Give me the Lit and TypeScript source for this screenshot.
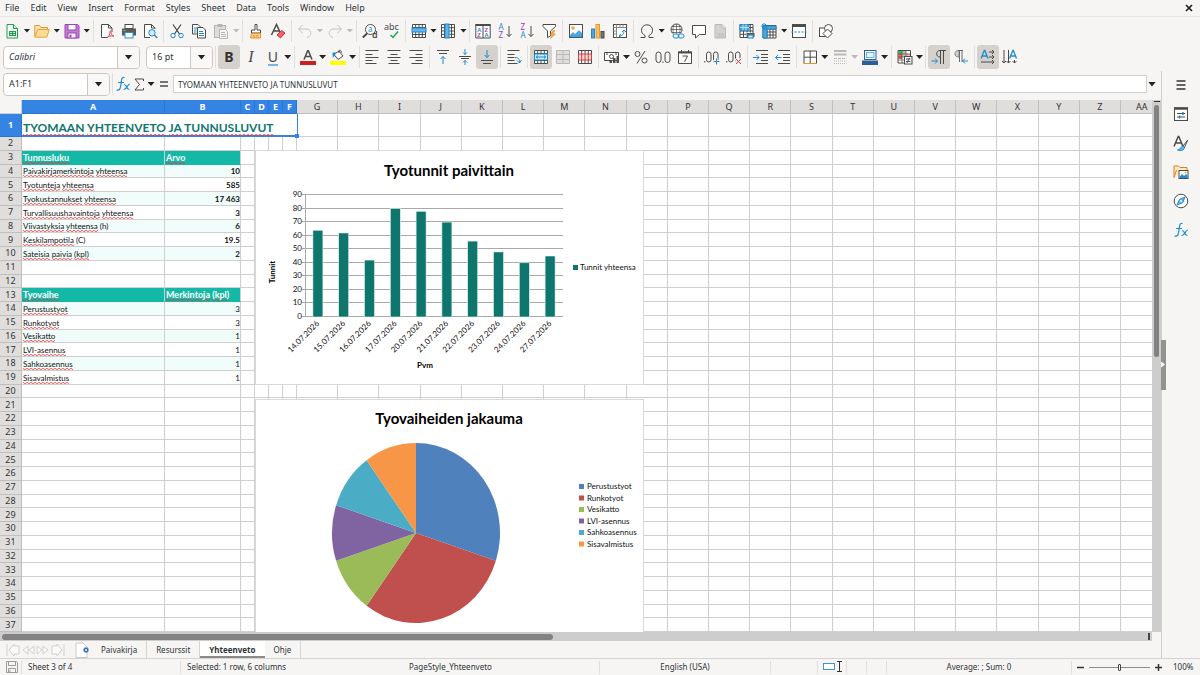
import { LitElement, html, svg, css, nothing } from "lit";
import { customElement } from "lit/decorators.js";
import { classMap } from "lit/directives/class-map.js";

const D = "#4b4b49";
const B = "#1e8bcd";

const ICONS: Record<string, unknown> = {
  new: svg`<path d="M3 1.500h6.500l4 4v9.500H3z" fill="#fff" stroke="#1a9f4a"/><path d="M9.500 1.500v4h4" fill="#c9efd3" stroke="#1a9f4a"/><rect x="5" y="8" width="7" height="5" fill="#1a9f4a"/><path d="M6 9.500h2M9 9.500h2M6 11.500h2M9 11.500h2" stroke="#c9efd3"/>`,
  open: svg`<path d="M.8 13.500V2.500h4.700l1.500 2h6.500v3" fill="#fbe3b4" stroke="#e59728"/><path d="M.8 14.200 3.800 6.500h11.500l-2.500 7.700z" fill="#fddc97" stroke="#e8a33d"/>`,
  save: svg`<path d="M1 1.500h12.500l1.500 1.500v12H1z" fill="#c37ad6" stroke="#9c44b4"/><rect x="4" y="1.500" width="8" height="5.500" fill="#fff" stroke="#9c44b4"/><rect x="4" y="10" width="8" height="5" fill="#fff" stroke="#9c44b4"/><rect x="5.500" y="11.500" width="2" height="3" fill="#9c44b4"/>`,
  pdf: svg`<path d="M13 9V5L9.500 1.500h-7v13H9" fill="#fff" stroke="${D}"/><path d="M9.500 1.500V5H13" fill="none" stroke="${D}"/><path d="M8 15c2-1.500 3-4 3-6.500 0-1 1.200-1 1 .2-.3 2 1.500 4.300 3 4.600M8.500 14c2-1.200 4-1.500 6.500-.7" fill="none" stroke="#e0454d"/>`,
  print: svg`<rect x="4" y="1.500" width="8" height="4" fill="#fff" stroke="${D}"/><path d="M1 5.500h14v7H1z" fill="#5a5a58"/><rect x="4" y="9.500" width="8" height="5.500" fill="#fff" stroke="#2b8fd6"/><path d="M2.500 7.500h2" stroke="#63bce8"/>`,
  preview: svg`<path d="M13 6V5L9.500 1.500h-7v13H8" fill="#fff" stroke="${D}"/><path d="M9.500 1.500V5H13" fill="none" stroke="${D}"/><circle cx="10" cy="9.800" r="3.200" fill="#d5ecfa" stroke="${B}"/><path d="m12.300 12 3 3" stroke="${B}" stroke-width="1.500"/>`,
  cut: svg`<path d="M4 1.500 10.500 11M12 1.500 5.500 11" stroke="${D}" stroke-width="1.300" fill="none"/><circle cx="4" cy="12.600" r="2.200" fill="none" stroke="${B}"/><circle cx="12" cy="12.600" r="2.200" fill="none" stroke="${B}"/>`,
  copy: svg`<path d="M1.500 1.500h5.500l2.500 2.500v7h-8z" fill="#fff" stroke="${D}"/><path d="M6.500 4.500H12l2.500 2.500v8h-8z" fill="#fff" stroke="${D}"/><path d="M3 5h3M3 7h2.500M3 9h2.500M8 8.500h4M8 10.500h5M8 12.500h5" stroke="${B}"/>`,
  paste: svg`<rect x="1.500" y="2.500" width="11" height="12" fill="#dcdcda" stroke="#b5b5b3"/><rect x="4.500" y="1" width="5" height="3" fill="#b5b5b3"/><path d="M6.500 6.500h6l2 2v7h-8z" fill="#f5f5f4" stroke="#b5b5b3"/><path d="M8 9.500h4M8 11.500h5M8 13.500h5" stroke="#b5b5b3"/>`,
  brush: svg`<path d="M7 1.500h2V7h3.500v3h-9V7H7z" fill="#fff" stroke="${D}"/><path d="M3.500 10.500h9v4.500h-10z" fill="#fbc98a" stroke="#e59728"/><path d="M6 12v3M9 12v3" stroke="#e59728"/>`,
  clear: svg`<path d="M1.500 12 6.500 1.500 10 9M3.500 8h5.500" fill="none" stroke="${D}" stroke-width="1.500"/><path d="m7 12 4.500-4.500 3.500 2.500-4.500 5z" fill="#f0626c" stroke="#d3303c"/>`,
  undo: svg`<path d="M5.500 2 1.500 6l4 4M1.500 6H9c7 0 5.500 8 1 8.500" fill="none" stroke="#c4c4c2"/>`,
  redo: svg`<path d="M10.500 2l4 4-4 4M14.500 6H7C0 6 1.500 14 6 14.500" fill="none" stroke="#c4c4c2"/>`,
  find: svg`<circle cx="8.500" cy="6.500" r="5" fill="#fff" stroke="${D}"/><path d="M5 10.500.8 14.500" stroke="${D}" stroke-width="2"/><text x="6" y="9" font-size="8" fill="${B}">a</text><text x="10" y="15" font-size="9" font-weight="600" fill="${D}">d</text>`,
  spell: svg`<text x="0" y="7" font-size="9" fill="${D}">abc</text><path d="m6.500 12 2.500 2.500 5-6" fill="none" stroke="#1fa653" stroke-width="1.500"/>`,
  rows: svg`<path d="M1.500 1.500h13v13h-13zM1.500 4.500h13M1.500 11.500h13M4.700 1.500v13M8 1.500v13M11.300 1.500v13" fill="#fff" stroke="${D}"/><rect x="1" y="5" width="14" height="4" fill="#63b4ea" stroke="${B}"/>`,
  cols: svg`<path d="M1.500 1.500h13v13h-13zM1.500 4.700h13M1.500 8h13M1.500 11.300h13M4.500 1.500v13M11.500 1.500v13" fill="#fff" stroke="${D}"/><rect x="5" y="1" width="4" height="14" fill="#63b4ea" stroke="${B}"/>`,
  sort: svg`<path d="M.8 1.500h14.400v13.500H.8zM8 3v12" fill="#fff" stroke="${D}"/><path d="M.5 2h15" stroke="${D}" stroke-width="2"/><g font-size="6" font-weight="600"><text x="2.200" y="8.500" fill="${B}">A</text><text x="2.200" y="14.300" fill="#a33bb5">Z</text><text x="9.500" y="8.500" fill="#a33bb5">Z</text><text x="9.500" y="14.300" fill="${B}">A</text></g>`,
  az: svg`<g font-size="8"><text x="1.500" y="7" fill="${B}">A</text><text x="1.500" y="15" fill="#a33bb5">Z</text></g><path d="M12 3v10.500M9.500 11l2.500 2.500 2.500-2.500" fill="none" stroke="${D}"/>`,
  za: svg`<g font-size="8"><text x="1.500" y="7" fill="#a33bb5">Z</text><text x="1.500" y="15" fill="${B}">A</text></g><path d="M12 3v10.500M9.500 11l2.500 2.500 2.500-2.500" fill="none" stroke="${D}"/>`,
  filter: svg`<path d="M2 1.500h12.500v2L9.500 8v5l-3 1.500V8L2 3.500z" fill="#fff" stroke="${D}"/><path d="M12 7.500 9 12h2l-1.500 3.500L14.500 11H12l2-3.500z" fill="#f4a340" stroke="#e08a1e" stroke-width=".5"/>`,
  image: svg`<rect x="1.500" y="1.500" width="13" height="13" fill="#fff" stroke="${D}"/><circle cx="5" cy="5" r="1.700" fill="#f4a340"/><path d="M2 12.500 5 9.500l2 2 4-4 3 3V14H2z" fill="#4fa5df" stroke="${B}" stroke-width=".6"/>`,
  chart: svg`<rect x="1.500" y="6" width="3" height="9" fill="#4fa5df" stroke="${B}"/><rect x="6" y="1.500" width="3.500" height="13.500" fill="#fbbd6b" stroke="#e59728"/><rect x="11" y="8.500" width="3" height="6.500" fill="#777" stroke="${D}"/>`,
  pivot: svg`<rect x="1.500" y="1.500" width="13" height="13" fill="#fff" stroke="${D}"/><path d="M1.500 4.500h13M4.500 1.500v13M8 1.500v3M11 1.500v3M1.500 8h3M1.500 11h3" stroke="#8a8a88"/><path d="M7 13c3.500 0 5-2 5-6M9 11l-2 2 2 1.500M10 9l2-2 2 2" fill="none" stroke="${B}"/>`,
  omega: svg`<path d="M1.500 14.500H6v-2C3.500 11.300 2.500 9.500 2.500 7.200 2.500 4 4.800 1.800 8 1.800s5.500 2.200 5.500 5.400c0 2.300-1 4.100-3.500 5.300v2h4.500" fill="none" stroke="${D}"/>`,
  link: svg`<circle cx="7.500" cy="6.500" r="5.500" fill="#fff" stroke="${D}"/><path d="M2 6.500h11M3 3.500h9M3 9.500h9M7.500 1v11M5 2c-1.500 3-1.500 6 0 9M10 2c1.500 3 1.500 6 0 9" fill="none" stroke="${D}" stroke-width=".7"/><rect x="3.500" y="10.500" width="12.500" height="5" fill="#f6f5f4"/><rect x="4" y="11" width="6" height="4" rx="2" fill="none" stroke="${B}"/><rect x="9" y="11" width="6" height="4" rx="2" fill="none" stroke="${B}"/>`,
  comment: svg`<path d="M1.500 2.500h13v9H8.500L4.500 15v-3.500h-3z" fill="#fff" stroke="${D}"/>`,
  headfoot: svg`<path d="M3 1.500h7l3.500 3.500v10H3z" fill="#d2d2d0" stroke="#b9b9b7"/><path d="M10 1.500V5h3.500" fill="#eee" stroke="#b9b9b7"/><path d="M5 11h7M5 13h7" stroke="#b9b9b7"/>`,
  printarea: svg`<path d="M1 1.500h13v13H1zM1 4.500h13M1 8h13M1 11.300h6M4.500 1.500v13M8 1.500v8M11.300 1.500v8" fill="#fff" stroke="${D}"/><path d="M1 1.500h9v6H1z" fill="#4fa5df" stroke="${B}"/><path d="M1 4.500h9M4 1.500v6M7 1.500v6" stroke="#b9def5"/><rect x="7.500" y="10" width="8" height="4" fill="#5a5a58"/><rect x="9" y="12" width="5" height="3" fill="#cde8f8" stroke="${B}"/>`,
  freeze: svg`<path d="M2 2.500h13v12.500H2zM2 6h13M2 9h13M2 12h13M6 3v12M9 3v12M12 3v12" fill="#fff" stroke="${D}"/><path d="M2 3h13v3H2zM2 3h4v12H2z" fill="#4fa5df" stroke="${B}"/><path d="M3 0v6M0 3h6M1 1l4 4M5 1 1 5" stroke="${B}"/>`,
  split: svg`<rect x="1.500" y="1.500" width="13" height="13" fill="#fff" stroke="${D}"/><path d="M1 2.500h14" stroke="${D}" stroke-width="3"/><path d="M.5 9h15" stroke="${B}" stroke-dasharray="2 1.300"/>`,
  shapes: svg`<rect x="1.500" y="5" width="8" height="8.500" fill="#fff" stroke="${D}"/><circle cx="10.500" cy="5.500" r="4" fill="#fff" stroke="${D}"/><path d="m9.500 6 4.500 4.500-4.500 4.500L5 10.500z" fill="#fff" stroke="${D}"/>`,
  fontcolor: svg`<path d="M4 10.500 7.700 1.800h.6L12 10.500M5.500 7.500h5" fill="none" stroke="${D}" stroke-width="1.500"/><rect x="0" y="12" width="16" height="4" fill="#c9211e"/>`,
  fill: svg`<path d="m4 5.500 5-3.500 4 5-5 3.500z" fill="#fff" stroke="${D}"/><path d="M9 4c-.5-4 2-3.500 2.500-.5" fill="none" stroke="${D}"/><path d="M2.500 3.500h4L2.800 9z" fill="${B}"/><rect x="0" y="12" width="16" height="4" fill="#ffff00"/>`,
  left: svg`<path d="M1.500 1.500h13M1.500 5.500h7M1.500 8.500h13M1.500 11.500h7M1.500 14.500h11" stroke="${D}"/>`,
  center: svg`<path d="M1.500 1.500h13M4.500 5.500h7M1.500 8.500h13M4.500 11.500h7M2.500 14.500h11" stroke="${D}"/>`,
  right: svg`<path d="M1.500 1.500h13M7.500 5.500h7M1.500 8.500h13M7.500 11.500h7M3.500 14.500h11" stroke="${D}"/>`,
  top: svg`<path d="M2 1.500h12M4 4.500h8" stroke="${D}"/><path d="M8 15V7.500M5.500 10 8 7.500 10.500 10" fill="none" stroke="${B}"/>`,
  middle: svg`<path d="M2 7.500h12M4 9.500h8" stroke="${D}"/><path d="M8 0v5.500M6 3.500l2 2 2-2M8 16v-4.500M6 13.500l2-2 2 2" fill="none" stroke="${B}"/>`,
  bottom: svg`<path d="M2 11.500h12M4 14.500h8" stroke="${D}"/><path d="M8 1v7.500M5.500 6 8 8.500 10.500 6" fill="none" stroke="${B}"/>`,
  wrap: svg`<path d="M1.500 1.500h12M1.500 5.500h7M1.500 8.500h7M1.500 11.500h7M1.500 14.500h10" stroke="${D}"/><path d="M9 8.500c4 0 4.500 2 4.500 5.500M11 11.500l2.500 2.500 2-3" fill="none" stroke="${B}"/>`,
  merge: svg`<path d="M1.500 1.500h13v13h-13zM4.700 1.500v13M8 1.500v13M11.300 1.500v13M1.500 4.500h13M1.500 11.500h13" fill="#fff" stroke="${D}"/><rect x="1.500" y="5" width="13" height="6" fill="#cfe8f8" stroke="${B}"/><path d="M3 8h10M5 6.500 3.300 8 5 9.500M11 6.500 12.700 8 11 9.500" fill="none" stroke="${B}"/>`,
  unmerge: svg`<path d="M1.500 1.500h13v13h-13zM8 1.500v13M1.500 5.500h13M1.500 10.500h13" fill="#dededc" stroke="#b9b9b7"/>`,
  unmerge2: svg`<path d="M1.500 1.500h13v13h-13zM4.700 1.500v13M8 1.500v13M11.300 1.500v13" fill="#fff" stroke="${D}"/><path d="M1.500 5h13v6h-13zM4.700 5v6M8 5v6M11.300 5v6" fill="#fbdcdc" stroke="#dc3b41"/>`,
  currency: svg`<path d="M.5 3.500h14v8H.5z" fill="#fff" stroke="${D}"/><circle cx="7.500" cy="7.500" r="2" fill="none" stroke="${D}"/><path d="M2 5h2M11 5h2" stroke="${D}"/><path d="M9 9h2.500v5H9zM12.500 7H15v7h-2.500zM5.500 11H8v3H5.500z" fill="${D}"/>`,
  percent: svg`<circle cx="4.500" cy="5" r="2.500" fill="none" stroke="${D}"/><circle cx="11.500" cy="11.500" r="2.500" fill="none" stroke="${D}"/><path d="m12 2-8 12.500" stroke="${D}"/>`,
  number: svg`<rect x="1" y="3" width="5" height="10.500" rx="2.500" fill="none" stroke="${D}"/><rect x="10" y="3" width="5" height="10.500" rx="2.500" fill="none" stroke="${D}"/><path d="M8 12.500v1.500" stroke="${D}"/>`,
  date: svg`<path d="M1.500 3h13v11.500h-13z" fill="#fff" stroke="${D}"/><path d="M1 3.500h14" stroke="${D}" stroke-width="2"/><path d="M4.500 1v3M11.500 1v3" stroke="${D}"/><path d="M5.500 7h5l-3 6" fill="none" stroke="${D}"/>`,
  decadd: svg`<path d="M.8 12v1.500" stroke="${D}"/><rect x="2.500" y="3" width="4.500" height="10" rx="2.250" fill="none" stroke="${D}"/><rect x="9.500" y="3" width="4.500" height="10" rx="2.250" fill="none" stroke="${D}"/><path d="M8.500 12.500h7M12 9v7" stroke="#f6f5f4" stroke-width="3"/><path d="M9.500 12.500h6M12.500 9.500v6" stroke="${B}"/>`,
  decdel: svg`<path d="M.8 12v1.500" stroke="${D}"/><rect x="2.500" y="3" width="4.500" height="10" rx="2.250" fill="none" stroke="${D}"/><rect x="9.500" y="3" width="4.500" height="10" rx="2.250" fill="none" stroke="${D}"/><path d="m9.500 9.500 6 6M15.500 9.500l-6 6" stroke="#f6f5f4" stroke-width="3"/><path d="m10 10 5 5M15 10l-5 5" stroke="#dc3b41"/>`,
  indent: svg`<path d="M3 1.500h12M8 5.500h7M8 8.500h7M8 11.500h7M3 14.500h12" stroke="${D}"/><path d="M0 8.500h6M3.500 6 6 8.500 3.500 11" fill="none" stroke="${B}"/>`,
  outdent: svg`<path d="M3 1.500h12M8 5.500h7M8 8.500h7M8 11.500h7M3 14.500h12" stroke="${D}"/><path d="M.5 8.500h6M3 6 .5 8.500 3 11" fill="none" stroke="${B}"/>`,
  border: svg`<path d="M2 2h12.500v12.500H2zM8.200 2v12.500M2 8.200h12.500" fill="#fff" stroke="${D}"/><path d="M1.500 14.500h13.500" stroke="#e59728"/>`,
  linestyle: svg`<path d="M2 2h12.500M2 5.500h12.500" stroke="#b9b9b7" stroke-width="2"/><path d="M2 9.500h12.500" stroke="#b9b9b7" stroke-dasharray="3 1"/><path d="M2 12h12.500M2 14.500h12.500" stroke="#b9b9b7" stroke-dasharray="1 1"/>`,
  bordercolor: svg`<rect x="2.500" y="1.500" width="11.500" height="9" fill="#fff" stroke="#2a6099" /><rect x="4.500" y="3.500" width="7.500" height="5" fill="#e9f3fa" stroke="#63b4ea"/><rect x="0" y="11.500" width="16" height="4.500" fill="#2a6099"/>`,
  condfmt: svg`<path d="M1 1.500h12.500v12.500H1z" fill="#fff" stroke="${D}"/><path d="M1 2h4v3H1z" fill="#3fb865"/><path d="M5 2h4v3H5z" fill="#8fd6a2"/><path d="M1 5h4v5H1z" fill="#e8636a"/><path d="M5 5h8v3H5z" fill="#f3b4b4"/><path d="M1 5h12.500M1 8h12.500M1 11h12.500M5 1.500V14M9 1.500V14" stroke="${D}" stroke-width=".7"/><rect x="7.500" y="7.500" width="7.500" height="7.500" fill="#fff" stroke="${D}"/><path d="M9 10h4.500M9 12.500h4.500M12.500 9 10 13.800" stroke="${D}"/>`,
  ltr: svg`<path d="M15 1.500H9c-4.500 0-4.500 6.500 0 6.500M9.500 1.500V15M12.500 1.500V15" fill="none" stroke="${D}"/><path d="M.5 12h6M4 9.500 6.500 12 4 14.500" fill="none" stroke="${B}"/>`,
  rtl: svg`<path d="M6 1.500c-5.500-.5-5.500 7 0 6.500z" fill="#cfcfcd" stroke="#8a8a88"/><path d="M5 1.500h5M6.500 1.500V13M9 1.500V13" fill="none" stroke="#6a6a68"/><path d="M15 12H9.500M12 9.500 9.500 12l2.500 2.500" fill="none" stroke="${B}"/>`,
  hdir: svg`<path d="M1 9.500 4.300 1.500h.5L8 9.500M2 7h5" fill="none" stroke="${B}" stroke-width="1.300"/><path d="M9 3h5M12 1l2 2-2 2M9 8h5M12 6l2 2-2 2M1 13h13M12 11l2 2-2 2" fill="none" stroke="${D}"/>`,
  vdir: svg`<path d="M7.500 9.500 10.800 1.500h.5L14.500 9.500M8.500 7h5" fill="none" stroke="${B}" stroke-width="1.300"/><path d="M2 1v13M0 12l2 2 2-2M6.500 1v13M4.500 12l2 2 2-2M12.500 11v3M10.500 12l2 2 2-2" fill="none" stroke="${D}"/>`,
  fx: svg`<path d="M9.500 1.500C6.500.5 6.500 4 6 8s-1 7-4.500 6M3 6.500h6" fill="none" stroke="${B}" stroke-width="1.200"/><path d="M9 8.500c3-.5 2 5.500 5.500 5M15 8c-2.500-.5-3 6-6.500 5.500" fill="none" stroke="${B}" stroke-width="1.200"/>`,
  sigma: svg`<path d="M12.500 5V3H4l4.500 5.500L4 14h8.500v-2" fill="none" stroke="${D}"/>`,
  equals: svg`<path d="M5 6h8M5 10h8" stroke="${D}" stroke-width="1.700"/>`,
  menu: svg`<path d="M3.500 4h9M3.500 8h9M3.500 12h9" stroke="#333" stroke-width="1.300"/>`,
  props: svg`<rect x="1.500" y="2" width="13" height="12.500" fill="#fff" stroke="${D}"/><path d="M1 2.500h14" stroke="${D}" stroke-width="2.500"/><path d="M4 7.500h8M4 11h8" stroke="${D}"/><path d="M10 6v3M6.500 9.500v3" stroke="${B}" stroke-width="1.500"/>`,
  styles: svg`<path d="M1 11.500 5.200 1.500h.6L10 11.500M2.500 8h6.500" fill="none" stroke="${D}" stroke-width="1.500"/><path d="M14.800 5 10 11l1.500 1.200z" fill="#fff" stroke="${D}"/><path d="M10 11c-2 0-2 3.500-5.500 4 3 1 7 .5 7-2.800z" fill="#63b4ea" stroke="${B}"/>`,
  gallery: svg`<path d="M1 13.500V2h4.500L7 3.500h7V6" fill="#fdebc8" stroke="#e07d1e"/><path d="M1 13.500 3.500 6" stroke="#e07d1e"/><rect x="6" y="6.500" width="9" height="8" fill="#fff" stroke="${D}"/><path d="m6.500 13 2.500-3 2 2 2-2 1.500 1.500V14h-8z" fill="${B}"/><circle cx="12.500" cy="8.500" r="1" fill="#f4a340"/>`,
  navigator: svg`<circle cx="8" cy="8" r="6.800" fill="#fff" stroke="${D}"/><path d="M12 4 9.800 9.500 4 12l2.500-5.500z" fill="#63b4ea" stroke="${B}"/><circle cx="8" cy="8" r="1" fill="#fff"/>`,
  disk: svg`<path d="M.5 2.500h10l1 1v10H.5zM2.500 2.500v4h7v-4M2.500 13.500v-4h7v4M4 11v2" fill="none" stroke="#9b9b99"/>`,
  addsheet: svg`<path d="M2 1h7l4 4v10.500H2z" fill="#fff" stroke="#c9c9c7"/><path d="M12 5.500v5M9.500 8h5" stroke="#2a6bb5" stroke-width="3"/><path d="M12 7v2M11 8h2" stroke="#fff"/>`,
  close: svg`<path d="m5 5 6 6M11 5l-6 6" stroke="#222" stroke-width="1.700"/>`,
  first: svg`<path d="M2 2v12M14 4H9V2L4 8l5 6v-2h5z" fill="#fafafa" stroke="#cfcfcd"/>`,
  prev: svg`<path d="m8 4-5 4 5 4zM14 4 9 8l5 4z" fill="#fafafa" stroke="#cfcfcd"/>`,
  next: svg`<path d="m2 4 5 4-5 4zM8 4l5 4-5 4z" fill="#fafafa" stroke="#cfcfcd"/>`,
  last: svg`<path d="M14 2v12M2 4h5V2l5 6-5 6v-2H2z" fill="#fafafa" stroke="#cfcfcd"/>`,
  selmode: svg`<rect x="-.5" y="4.500" width="11" height="6" fill="#fff" stroke="#3c96d2"/><path d="M13 2.500h5M15.500 2.500v10M13 12.500h5" fill="none" stroke="#333"/>`,
  minus: svg`<path d="M4 8.500h7" stroke="#333" stroke-width="1.500"/>`,
  plus: svg`<path d="M5 8.500h7M8.500 5v7" stroke="#333" stroke-width="1.500"/>`,
};

const icon = (name: string) =>
  html`<svg class="icon" viewBox="0 0 16 16" aria-hidden="true">${ICONS[name]}</svg>`;

/* Toolbar entry: "|" separator, "name" button, suffix "v" adds a drop-down arrow,
   "!" marks a pressed toggle, "-" a dimmed drop-down arrow. */
const STANDARD =
  "new:v open:v save:v | pdf print preview | cut copy paste:- | brush clear | undo:- redo:- | find spell | rows:v cols:v | sort az za filter | image chart pivot | omega:v link comment headfoot | printarea freeze:v split | shapes".split(" ");
const FORMATTING =
  "bold:! italic underline:v | fontcolor:v fill:v | left center right | top middle bottom:! | wrap | merge:! unmerge unmerge2 | currency:v percent number date | decadd decdel | indent outdent | border:v linestyle:- bordercolor:v | condfmt:v | ltr:! rtl | hdir:! vdir".split(" ");

const COLS = "A B C D E F G H I J K L M N O P Q R S T U V W X Y Z AA".split(" ");
const ROW_COUNT = 37;

type Row = { a: string; b: string; kind: "head" | "kpi" | "count" };
const DATA: Record<number, Row> = {
  3: { a: "Tunnusluku", b: "Arvo", kind: "head" },
  4: { a: "Paivakirjamerkintoja yhteensa", b: "10", kind: "kpi" },
  5: { a: "Tyotunteja yhteensa", b: "585", kind: "kpi" },
  6: { a: "Tyokustannukset yhteensa", b: "17 463", kind: "kpi" },
  7: { a: "Turvallisuushavaintoja yhteensa", b: "3", kind: "kpi" },
  8: { a: "Viivastyksia yhteensa (h)", b: "6", kind: "kpi" },
  9: { a: "Keskilampotila (C)", b: "19.5", kind: "kpi" },
  10: { a: "Sateisia paivia (kpl)", b: "2", kind: "kpi" },
  13: { a: "Tyovaihe", b: "Merkintoja (kpl)", kind: "head" },
  14: { a: "Perustustyot", b: "3", kind: "count" },
  15: { a: "Runkotyot", b: "3", kind: "count" },
  16: { a: "Vesikatto", b: "1", kind: "count" },
  17: { a: "LVI-asennus", b: "1", kind: "count" },
  18: { a: "Sahkoasennus", b: "1", kind: "count" },
  19: { a: "Sisavalmistus", b: "1", kind: "count" },
};

const TITLE = "TYOMAAN YHTEENVETO JA TUNNUSLUVUT";
const HOURS: [string, number][] = [
  ["14.07.2026", 64], ["15.07.2026", 62], ["16.07.2026", 42], ["17.07.2026", 80], ["20.07.2026", 78],
  ["21.07.2026", 70], ["22.07.2026", 56], ["23.07.2026", 48], ["24.07.2026", 40], ["27.07.2026", 45],
];
const PHASES: [string, number, string][] = [
  ["Perustustyot", 3, "#4f81bd"], ["Runkotyot", 3, "#c0504d"], ["Vesikatto", 1, "#9bbb59"],
  ["LVI-asennus", 1, "#8064a2"], ["Sahkoasennus", 1, "#4bacc6"], ["Sisavalmistus", 1, "#f79646"],
];

const spelled = (text: string) =>
  text.split(" ").map((w, i) => {
    const plain = /^(\(h\)|\(C\))$/.test(w);
    return html`${i ? " " : ""}<span class=${plain ? "" : "typo"}>${w}</span>`;
  });

@customElement("hours-chart")
class HoursChart extends LitElement {
  static styles = css`
    :host { display: block; }
    svg { display: block; width: 100%; height: 100%; font-family: Lato, "Liberation Sans", sans-serif; }
    .title { font-size: 15px; font-weight: 700; }
    .label { font-size: 8px; fill: #111; }
    .axis { font-size: 8px; font-weight: 700; }
  `;
  render() {
    const x0 = 49, x1 = 307, y0 = 166, y1 = 44;
    const y = (v: number) => y0 - ((y0 - y1) * v) / 90;
    const step = (x1 - x0) / HOURS.length;
    return html`<svg viewBox="0 0 387 233" role="img" aria-label="Tyotunnit paivittain">
      <text class="title" x="193" y="25" text-anchor="middle">Tyotunnit paivittain</text>
      ${[0, 10, 20, 30, 40, 50, 60, 70, 80, 90].map(
        (v) => svg`<path d="M${x0 - 3} ${Math.round(y(v)) - 0.5}H${x1}" stroke="#a9a9a9"/>
          <text class="label" x=${x0 - 3} y=${y(v) + 2} text-anchor="end">${v}</text>`
      )}
      <path d="M${x0 + 0.5} ${y1}V${y0}" stroke="#a9a9a9" />
      ${HOURS.map(([d, v], i) => {
        const cx = x0 + step * (i + 0.5);
        return svg`<rect x=${cx - 5} y=${y(v)} width="10" height=${y0 - y(v)} fill="#0f766e" stroke="#dff3f0" stroke-width=".6"/>
          <text class="label" text-anchor="end" transform="translate(${cx + 2} ${y0 + 7}) rotate(-45)">${d}</text>`;
      })}
      <text class="axis" text-anchor="middle" transform="translate(19 121) rotate(-90)">Tunnit</text>
      <text class="axis" x="169" y="217" text-anchor="middle">Pvm</text>
      <rect x="317" y="114" width="5" height="5" fill="#0f766e" />
      <text class="label" x="324" y="119">Tunnit yhteensa</text>
    </svg>`;
  }
}

@customElement("phase-chart")
class PhaseChart extends LitElement {
  static styles = HoursChart.styles;
  render() {
    const cx = 160, cy = 133, rx = 84, ry = 90;
    const total = PHASES.reduce((s, p) => s + p[1], 0);
    const at = (f: number) => `${cx + rx * Math.sin(2 * Math.PI * f)} ${cy - ry * Math.cos(2 * Math.PI * f)}`;
    let acc = 0;
    return html`<svg viewBox="0 0 387 233" role="img" aria-label="Tyovaiheiden jakauma">
      <text class="title" x="193" y="24" text-anchor="middle">Tyovaiheiden jakauma</text>
      ${PHASES.map(([name, n, color], i) => {
        const from = at(acc / total);
        acc += n;
        return svg`<path d="M${cx} ${cy}L${from}A${rx} ${ry} 0 0 1 ${at(acc / total)}Z" fill=${color}/>
          <rect x="323" y=${84 + i * 11.5} width="5" height="5" fill=${color}/>
          <text class="label" x="331" y=${89 + i * 11.5}>${name}</text>`;
      })}
    </svg>`;
  }
}

@customElement("app-root")
class AppRoot extends LitElement {
  static styles = css`
    :host {
      display: flex; flex-direction: column; height: 100vh; overflow: hidden;
      background: #f6f5f4; color: #2e3436;
      font: 9px/12px "Noto Sans", "Open Sans", sans-serif;
    }
    * { box-sizing: border-box; }
    button, input, select { font: inherit; color: inherit; margin: 0; padding: 0; border: 0; background: none; }
    .icon { width: 16px; height: 16px; display: block; flex: none; overflow: visible; }
    .caret { width: 7px; height: 4px; background: #222; clip-path: polygon(0 0, 100% 0, 50% 100%); display: block; }
    .caret.big { width: 8px; height: 5px; }
    .caret.dim { background: #bbb; }

    .menubar { display: flex; align-items: center; height: 17px; padding: 0 3px 0 5px; border-bottom: 1px solid #e6e5e4; flex: none; }
    .menubar nav { display: flex; gap: 11px; flex: 1; }

    .toolbar { display: flex; align-items: center; height: 27px; padding-left: 1px; flex: none; }
    .standard { max-width: 837px; }
    .formatting { max-width: 1021px; padding: 0 0 1px 3px; }
    .tool { flex: 0 1 22px; min-width: 0; height: 24px; display: flex; align-items: center; justify-content: center; border-radius: 3px; }
    .tool.on { background: #d5d1cd; }
    .drop { flex: 0 0 8px; height: 24px; display: flex; align-items: center; justify-content: center; }
    .sep { flex: 0 0 5px; height: 22px; background: linear-gradient(#e0dfdd, #e0dfdd) 2px 0 / 1px 100% no-repeat; }
    .glyph { font: 14px/18px "Noto Sans", sans-serif; color: #4b4b49; }
    .glyph.bold { font-weight: 700; color: #333; }
    .glyph.italic { font-family: "Liberation Serif", serif; font-style: italic; font-size: 16px; }
    .glyph.underline { border-bottom: 2px solid #7db4e6; line-height: 15px; }

    .combo { display: flex; position: relative; height: 23px; background: #fff; border: 1px solid #cdc7c2; border-radius: 4px; flex: none; overflow: hidden; }
    .combo select, .combo input { appearance: none; width: 100%; padding-left: 5px; outline: 0; }
    .combo .end { flex: 0 0 22px; display: flex; align-items: center; justify-content: center; border-left: 1px solid #cdc7c2; background: #f9f8f7; pointer-events: none; }
    .font { width: 137px; margin-right: 6px; }
    .font select { font-style: italic; }
    .size { width: 67px; }
    .namebox { width: 107px; }

    .main { display: flex; flex: 1; min-height: 0; }
    .work { display: flex; flex-direction: column; flex: 1; min-width: 0; }
    .formulabar { display: flex; align-items: center; height: 29px; padding: 0 5px 3px 3px; flex: none; }
    .formulabar .small { width: 16px; }
    .formula { flex: 1; min-width: 0; height: 18px; margin: 0 1px 0 2px; padding: 0 4px; background: #fff; border: 1px solid #cfcfcd; font-size: 8px; }

    .sheetrow { display: flex; flex: 1; min-height: 0; }
    .sheet { position: relative; flex: 1; min-width: 0; overflow: hidden; background: #fff; }
    table {
      display: grid; height: 100%;
      grid-template-columns: 22px 143px 76px repeat(4, 14px) repeat(20, minmax(0, 1fr)) 31px;
      grid-template-rows: 14px 23px repeat(36, minmax(0, 1fr));
    }
    thead, tbody, tr { display: contents; }
    th, td { padding: 0; min-width: 0; min-height: 0; border: solid #cfcfcf; border-width: 0 1px 1px 0; white-space: nowrap; display: flex; align-items: center; }
    th { background: #dfdedd; border-color: #c0bfbe; font-weight: 400; justify-content: center; color: #333; }
    th.sel { background: #3584e4; border-color: #2a76d2; color: #fff; font-weight: 700; }
    th.corner { background: #f6f5f4; border-color: #cfcfcf; }
    th.last { justify-content: flex-start; padding-left: 15px; border-right: 0; }
    td { font: 8px/12px Lato, "Liberation Sans", sans-serif; color: #111; padding: 1px 0 0 1px; }
    td.last { border-right: 0; }
    td.num { justify-content: flex-end; }
    td.strong { font-weight: 700; }
    td.tint { background: #f0fdfa; }
    td.head { background: #14b8a6; border-bottom-color: #14b8a6; color: #fff; font-size: 9px; font-weight: 700; }
    td.title { position: relative; grid-column: span 6; border: 0; box-shadow: 1px 0 0 #3584e4; border-bottom: 2px solid #3584e4; font-size: 12px; line-height: 16px; font-weight: 700; color: #0f766e; padding-top: 6px; }
    .title::after { content: ""; position: absolute; right: -2px; bottom: -3px; width: 4px; height: 4px; background: #3584e4; }
    .txt { white-space: pre; }
    .typo {
      padding-bottom: 1px;
      background: url("data:image/svg+xml,%3Csvg xmlns='http://www.w3.org/2000/svg' width='4' height='2'%3E%3Cpath d='M0 .3 2 1.700 4 .3' fill='none' stroke='%23e33' stroke-width='.8'/%3E%3C/svg%3E") left bottom repeat-x;
    }
    .chart { position: absolute; left: 255px; width: 389px; height: 235px; background: #fff; border: 1px solid #d9d9d9; }
    .hours { top: 50px; }
    .phases { top: 299px; }

    .vscroll { width: 9px; background: #cdcdcd; padding: 1px 1px 0 2px; }
    .vscroll::before { content: ""; display: block; height: 1px; background: #333; margin-bottom: 3px; }
    .vthumb { height: 47.5%; width: 5px; border-radius: 3px; background: #828282; }
    .hscroll { display: flex; align-items: center; height: 9px; margin-right: 9px; padding: 0 2px; background: #cdcdcd; flex: none; }
    .hthumb { width: 48%; height: 6px; border-radius: 3px; background: #828282; margin-right: auto; }
    .grip { width: 2px; height: 7px; background: #444; }

    .tabs { display: flex; height: 17px; flex: none; align-items: stretch; padding-left: 5px; font-size: 8px; }
    .tabs button { display: flex; align-items: center; justify-content: center; }
    .navbtn { width: 15px; }
    .add { width: 27px; padding-left: 7px; }
    .tab { padding: 0 9px; border-right: 1px solid #d5d4d3; }
    .tab.on { background: #fff; font-weight: 700; border-right: 0; border-bottom: 2px solid #8b8b89; padding-top: 2px; }

    .side { position: relative; width: 39px; flex: none; border-left: 1px solid #cfcecd; display: flex; flex-direction: column; align-items: center; gap: 7px; padding-top: 3px; }
    .side .tool { flex: 0 0 22px; width: 22px; }
    .handle { position: absolute; left: -1px; top: 50%; transform: translateY(-50%); width: 5px; height: 50px; background: #929290; display: flex; align-items: center; }
    .handle::before { content: ""; width: 4px; height: 6px; background: #fff; clip-path: polygon(0 0, 100% 50%, 0 100%); }

    .status {
      display: grid; height: 17px; flex: none; border-top: 1px solid #d5d4d3; font-size: 8px;
      grid-template-columns: 21px 159fr 223fr 196fr 171fr 47px 29px 20px 20px 185fr 96px 33px;
      align-items: center;
    }
    .status > * { display: flex; align-items: center; height: 13px; padding-left: 6px; border-left: 1px solid #e0dfdd; white-space: nowrap; }
    .status > .bare { border-left: 0; }
    .status > .mid { justify-content: center; padding: 0; }
    .status > .zoom { padding: 0 1px; }
    .zoom button { flex: none; }
    .range { appearance: none; flex: 1; min-width: 0; height: 12px; background: linear-gradient(#8b8b89, #8b8b89) 0 50% / 100% 1px no-repeat; }
    .range::-webkit-slider-thumb { appearance: none; width: 3px; height: 7px; background: #fff; border: 1px solid #444; border-radius: 1px; }
  `;

  private tools(list: string[]) {
    return list.map((entry) => {
      if (entry === "|") return html`<span class="sep"></span>`;
      const [name, flag] = entry.split(":");
      const letter = ({ bold: "B", italic: "I", underline: "U" } as Record<string, string>)[name];
      return html`<button class=${classMap({ tool: true, on: flag === "!" })} aria-label=${name}>
          ${letter ? html`<span class="glyph ${name}">${letter}</span>` : icon(name)}
        </button>
        ${flag === "v" || flag === "-"
          ? html`<button class="drop" aria-label="${name} options"><i class=${classMap({ caret: true, dim: flag === "-" })}></i></button>`
          : nothing}`;
    });
  }

  private row(n: number) {
    const d = DATA[n];
    const cells = COLS.slice(n === 1 ? 6 : 0).map((c) => {
      const cls = {
        last: c === "AA",
        head: false, tint: false, num: false, strong: false,
      };
      let text = "";
      if (d && (c === "A" || c === "B")) {
        text = c === "A" ? d.a : d.b;
        cls.head = d.kind === "head";
        cls.tint = d.kind !== "head" && n % 2 === 0;
        cls.num = c === "B" && d.kind !== "head";
        cls.strong = c === "B" && d.kind === "kpi";
      }
      return html`<td class=${classMap(cls)}>${text ? html`<span class="txt">${cls.num ? text : spelled(text)}</span>` : nothing}</td>`;
    });
    return html`<tr>
      <th scope="row" class=${n === 1 ? "sel" : ""}>${n}</th>
      ${n === 1 ? html`<td class="title" colspan="6"><span class="txt">${spelled(TITLE)}</span></td>` : nothing}
      ${cells}
    </tr>`;
  }

  render() {
    return html`
      <header class="menubar">
        <nav aria-label="Menu">
          ${["File", "Edit", "View", "Insert", "Format", "Styles", "Sheet", "Data", "Tools", "Window", "Help"].map((m) => html`<button>${m}</button>`)}
        </nav>
        <button aria-label="Close">${icon("close")}</button>
      </header>
      <div class="toolbar standard">${this.tools(STANDARD)}</div>
      <div class="toolbar formatting">
        <div class="combo font">
          <select aria-label="Font name"><option>Calibri</option></select>
          <span class="end"><i class="caret big"></i></span>
        </div>
        <div class="combo size">
          <select aria-label="Font size"><option>16 pt</option></select>
          <span class="end"><i class="caret big"></i></span>
        </div>
        <span class="sep"></span>
        ${this.tools(FORMATTING)}
      </div>
      <div class="main">
        <div class="work">
          <div class="formulabar">
            <div class="combo namebox">
              <input aria-label="Name box" .value=${"A1:F1"} />
              <span class="end"><i class="caret big"></i></span>
            </div>
            <span class="sep"></span>
            <button class="small" aria-label="Function wizard">${icon("fx")}</button>
            <button class="small" aria-label="Select function">${icon("sigma")}</button>
            <button class="drop" aria-label="Function options"><i class="caret"></i></button>
            <button class="small" aria-label="Formula">${icon("equals")}</button>
            <input class="formula" aria-label="Input line" .value=${TITLE} />
            <button class="drop" aria-label="Expand formula bar"><i class="caret big"></i></button>
          </div>
          <div class="sheetrow">
            <div class="sheet">
              <table>
                <thead>
                  <tr>
                    <th class="corner"></th>
                    ${COLS.map((c, i) => html`<th scope="col" class=${classMap({ sel: i < 6, last: c === "AA" })}>${c}</th>`)}
                  </tr>
                </thead>
                <tbody>${Array.from({ length: ROW_COUNT }, (_, i) => this.row(i + 1))}</tbody>
              </table>
              <hours-chart class="chart hours"></hours-chart>
              <phase-chart class="chart phases"></phase-chart>
            </div>
            <div class="vscroll"><div class="vthumb"></div></div>
          </div>
          <div class="hscroll"><div class="hthumb"></div><div class="grip"></div></div>
          <div class="tabs">
            ${["first", "prev", "next", "last"].map((n) => html`<button class="navbtn" aria-label="${n} sheet">${icon(n)}</button>`)}
            <button class="add" aria-label="Add sheet">${icon("addsheet")}</button>
            ${["Paivakirja", "Resurssit", "Yhteenveto", "Ohje"].map((t) => html`<button class=${classMap({ tab: true, on: t === "Yhteenveto" })}>${t}</button>`)}
          </div>
        </div>
        <aside class="side">
          ${["menu", "props", "styles", "gallery", "navigator", "fx"].map((n) => html`<button class="tool" aria-label=${n}>${icon(n)}</button>`)}
          <button class="handle" aria-label="Hide sidebar"></button>
        </aside>
      </div>
      <footer class="status">
        <span class="bare">${icon("disk")}</span>
        <span>Sheet 3 of 4</span>
        <span>Selected: 1 row, 6 columns</span>
        <span class="bare">PageStyle_Yhteenveto</span>
        <span class="mid">English (USA)</span>
        <span></span>
        <span>${icon("selmode")}</span>
        <span></span>
        <span></span>
        <span class="mid">Average: ; Sum: 0</span>
        <span class="zoom"><button aria-label="Zoom out">${icon("minus")}</button><input class="range" type="range" aria-label="Zoom" /><button aria-label="Zoom in">${icon("plus")}</button></span>
        <span class="bare">100%</span>
      </footer>
    `;
  }
}
